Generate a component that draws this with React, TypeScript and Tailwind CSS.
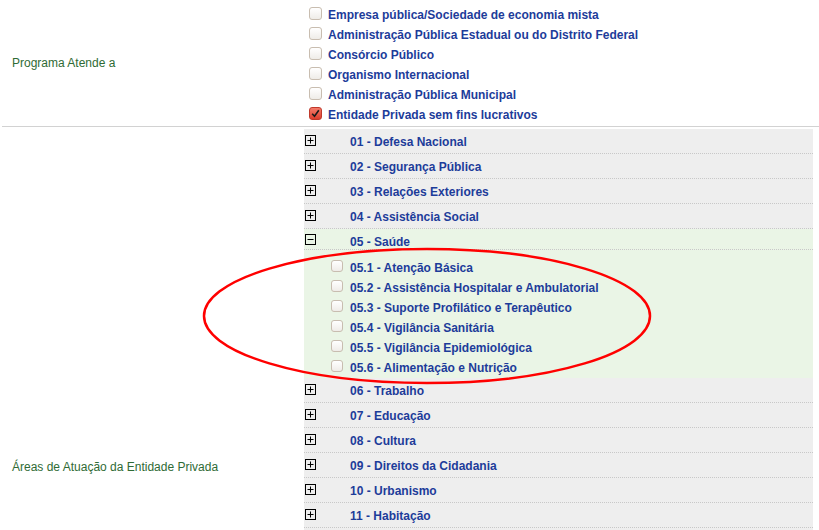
import React from 'react';

const tipos = [
  { label: 'Empresa pública/Sociedade de economia mista', checked: false },
  { label: 'Administração Pública Estadual ou do Distrito Federal', checked: false },
  { label: 'Consórcio Público', checked: false },
  { label: 'Organismo Internacional', checked: false },
  { label: 'Administração Pública Municipal', checked: false },
  { label: 'Entidade Privada sem fins lucrativos', checked: true },
];

const areas = [
  '01 - Defesa Nacional',
  '02 - Segurança Pública',
  '03 - Relações Exteriores',
  '04 - Assistência Social',
  '05 - Saúde',
  '06 - Trabalho',
  '07 - Educação',
  '08 - Cultura',
  '09 - Direitos da Cidadania',
  '10 - Urbanismo',
  '11 - Habitação',
  '12 - Saneamento',
  '13 - Gestão Ambiental',
  '14 - Ciência e Tecnologia',
  '15 - Agricultura',
  '16 - Organização Agrária',
  '17 - Indústria',
  '18 - Comércio e Serviços',
  '19 - Comunicações',
  '20 - Energia',
  '21 - Transporte',
  '22 - Desporto e Lazer',
];

const saude = [
  '05.1 - Atenção Básica',
  '05.2 - Assistência Hospitalar e Ambulatorial',
  '05.3 - Suporte Profilático e Terapêutico',
  '05.4 - Vigilância Sanitária',
  '05.5 - Vigilância Epidemiológica',
  '05.6 - Alimentação e Nutrição',
];

const Check: React.FC<{ checked?: boolean; size?: string }> = ({ checked, size = 'w-[13px] h-[13px]' }) =>
  checked ? (
    <span className={`${size} shrink-0 rounded-[3px] border border-[#c0392b] bg-gradient-to-b from-[#f47a6a] to-[#dd3b2b] flex items-center justify-center`}>
      <svg width="9" height="9" viewBox="0 0 9 9">
        <path d="M1.2 4.8 L3.5 7.2 L7.8 1.2" fill="none" stroke="#1a1a1a" strokeWidth="1.6" />
      </svg>
    </span>
  ) : (
    <span className={`${size} block shrink-0 rounded-[3px] border border-[#c8bdb0] bg-gradient-to-b from-white to-[#efece8]`} />
  );

const Toggle: React.FC<{ open?: boolean }> = ({ open }) => (
  <svg width="11" height="11" viewBox="0 0 11 11" className="block shrink-0">
    <rect x="0.5" y="0.5" width="10" height="10" fill="none" stroke="#000" strokeWidth="1" />
    <path d="M2.5 5.5 H8.5" stroke="#000" strokeWidth="1" />
    {!open && <path d="M5.5 2.5 V8.5" stroke="#000" strokeWidth="1" />}
  </svg>
);

export default function App() {
  return (
    <div className="relative w-[819px] bg-white font-['Liberation_Sans',Arial,sans-serif] text-[12px]">
      {/* Programa Atende a */}
      <div className="grid grid-cols-[304px_1fr] ml-[2px] border-b border-[#d2d2d2] h-[127px]">
        <div className="flex items-center pl-[10px] text-[#2f6b35]">Programa Atende a</div>
        <div className="pt-[5px] pl-[3px]">
          {tipos.map((t) => (
            <div key={t.label} className="flex items-center h-[20px]">
              <span className="block mt-[-3px]">
                <Check checked={t.checked} />
              </span>
              <span className="ml-[6px] font-bold text-[#1d3c9a]">{t.label}</span>
            </div>
          ))}
        </div>
      </div>

      {/* Áreas de Atuação */}
      <div className="grid grid-cols-[304px_1fr]">
        <div className="flex items-center pl-[12px] pt-[2px] text-[#2f6b35]">Áreas de Atuação da Entidade Privada</div>
        <div className="py-[2px] pr-[6px]">
          {areas.map((a) =>
            a.startsWith('05 ') ? (
              <div key={a} className="bg-[#eaf5e6]">
                <div className="flex items-center h-[21px] pt-[6px] border-b border-dotted border-[#c8c8c8]">
                  <span className="block ml-[1px] mt-[-5px]">
                    <Toggle open />
                  </span>
                  <span className="ml-[34px] font-bold text-[#1d3c9a]">{a}</span>
                </div>
                <div className="pt-[8px]">
                  {saude.map((s) => (
                    <div key={s} className="flex items-center h-[20px]">
                      <span className="block ml-[27px] mt-[-5px]">
                        <Check size="w-[12px] h-[12px]" />
                      </span>
                      <span className="ml-[7px] font-bold text-[#1d3c9a]">{s}</span>
                    </div>
                  ))}
                </div>
              </div>
            ) : (
              <div key={a} className="flex items-center h-[25px] pt-[1px] bg-[#eeeeee] border-b border-dotted border-[#c8c8c8]">
                <span className="block ml-[1px] mt-[-3px]">
                  <Toggle />
                </span>
                <span className="ml-[34px] font-bold text-[#1d3c9a]">{a}</span>
              </div>
            )
          )}
        </div>
      </div>

      {/* red annotation */}
      <svg className="absolute left-[202px] top-[247px] pointer-events-none" width="450" height="138" viewBox="0 0 450 138">
        <ellipse cx="225" cy="69" rx="223" ry="67" fill="none" stroke="#ff0000" strokeWidth="2.5" />
      </svg>
    </div>
  );
}
